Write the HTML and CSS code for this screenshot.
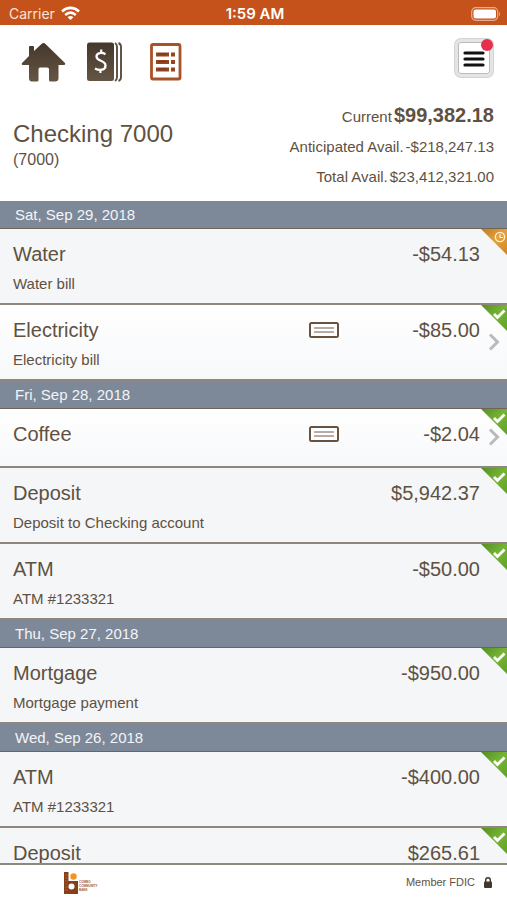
FILE: index.html
```html
<!DOCTYPE html>
<html lang="en">

<head>
    <meta charset="UTF-8">
    <meta name="viewport" content="width=device-width, initial-scale=1.0">
    <title>Checking 7000</title>
    <link rel="stylesheet" href="styles.css">
</head>

<body>
    <!-- shared icons -->
    <svg class="defs" aria-hidden="true">
        <defs>
            <linearGradient id="green" x1="0" y1="0" x2="1" y2="1">
                <stop offset="0" stop-color="#568d24" />
                <stop offset="0.5" stop-color="#75b435" />
                <stop offset="1" stop-color="#60a027" />
            </linearGradient>
            <linearGradient id="orange" x1="0" y1="0" x2="1" y2="1">
                <stop offset="0" stop-color="#bd7b25" />
                <stop offset="0.5" stop-color="#e5a13b" />
                <stop offset="1" stop-color="#cf851f" />
            </linearGradient>
            <linearGradient id="brown" x1="0" y1="0" x2="0" y2="1">
                <stop offset="0" stop-color="#44382b" />
                <stop offset="1" stop-color="#655544" />
            </linearGradient>
        </defs>
        <symbol id="done" viewBox="0 0 26 26">
            <path d="M0 0H26V26Z" fill="url(#green)" />
            <path d="M13 9L16.500 12.500L23.500 5.500" fill="none" stroke="#fff" stroke-width="2.800" />
        </symbol>
        <symbol id="pending" viewBox="0 0 26 26">
            <path d="M0 0H26V26Z" fill="url(#orange)" />
            <circle cx="19" cy="8" r="4.600" fill="none" stroke="#fff3d8" stroke-width="1.400" />
            <path d="M19 5V8.500H22" fill="none" stroke="#fff3d8" stroke-width="1.200" />
        </symbol>
        <symbol id="check" viewBox="0 0 30 16">
            <rect x="1" y="1" width="28" height="14" rx="1.500" fill="#fff" stroke="#685341" stroke-width="2" />
            <path d="M5 6H25M5 10H25" stroke="#a38f89" stroke-width="1.600" />
        </symbol>
        <symbol id="arrow" viewBox="0 0 12 18">
            <path d="M2 1.500L9.500 9L2 16.500" fill="none" stroke="#b9babd" stroke-width="3" />
        </symbol>
    </svg>

    <div class="app">
        <div class="status">
            <div class="carrier">
                <span>Carrier</span>
                <svg width="19" height="15" viewBox="0 0 19 15" fill="none" stroke="#fff" stroke-width="2.600">
                    <path d="M1 5.500C6 0.600 13 0.600 18 5.500" />
                    <path d="M4.200 9C7.500 6 11.500 6 14.800 9" />
                    <path d="M9.500 14L6.600 11.200C8.300 9.700 10.700 9.700 12.400 11.200Z" fill="#fff" stroke="none" />
                </svg>
            </div>
            <div class="time">1:59 AM</div>
            <div class="battery">
                <svg width="30" height="14" viewBox="0 0 30 14">
                    <rect x="0.700" y="0.700" width="26" height="12.600" rx="4" fill="none" stroke="#e6ac90" stroke-width="1.200" />
                    <rect x="2.500" y="2.500" width="22.500" height="9" rx="2" fill="#fff" />
                    <path d="M28 4.500Q30 7 28 9.500Z" fill="#e6ac90" />
                </svg>
            </div>
        </div>

        <header>
            <div class="toolbar">
                <nav>
                    <a href="#home" aria-label="Home">
                        <svg width="45" height="40" viewBox="0 0 45 40">
                            <path d="M8 5Q8 4 9 4H12Q13 4 13 5V9L20.500 2Q22.500 0 24.500 2L44 21Q45 23 42 23H37.500V36Q37.500 39.500 34 39.500H29.500Q28 39.500 28 38V27Q28 25.500 26 25.500H19Q17.500 25.500 17.500 27V38Q17.500 39.500 16 39.500H11Q8 39.500 8 36V23H2.500Q0 23 1 21L8 14Z" fill="url(#brown)" />
                        </svg>
                    </a>
                    <a href="#accounts" aria-label="Accounts">
                        <svg width="37" height="40" viewBox="0 0 37 40">
                            <rect x="1" width="27" height="38.500" y="0.500" rx="2.500" fill="url(#brown)" />
                            <path d="M29 1Q31 2 31 5V35Q31 38 29 39M32.500 1Q35 2 35 5V35Q35 38 32.500 39" fill="none" stroke="#5c4e3f" stroke-width="1.900" />
                            <path d="M19.500 12.200C16.500 10.400 10.500 10.200 10.500 14.500C10.500 19.500 19.500 18 19.500 23.500C19.500 28.500 13.500 28.800 9 26.500" fill="none" stroke="#fff" stroke-width="2.300" />
                            <path d="M15.200 7.500V11M14.400 27.500V31" stroke="#fff" stroke-width="2.200" />
                        </svg>
                    </a>
                    <a href="#history" aria-label="History">
                        <svg width="32" height="38" viewBox="0 0 32 38">
                            <rect x="1.500" y="1.500" width="28.500" height="34.500" rx="1.500" fill="#fff" stroke="#a95127" stroke-width="2.800" />
                            <path d="M6 11.500H19M6 19H19M6 26.500H19M21 11.500H25M21 19H25M21 26.500H25" stroke="#97441f" stroke-width="3.800" />
                            <path d="M8 11H17M8 18.500H17M8 26H17" stroke="#693620" stroke-width="1.200" />
                        </svg>
                    </a>
                </nav>
                <button class="menu" type="button" aria-label="Menu">
                    <svg width="22" height="18" viewBox="0 0 22 18">
                        <path d="M2 3H20M2 9H20M2 15H20" stroke="#111" stroke-width="3.200" stroke-linecap="round" />
                    </svg>
                    <span class="dot"></span>
                </button>
            </div>
            <div class="account">
                <div>
                    <h1>Checking 7000</h1>
                    <p class="number">(7000)</p>
                </div>
                <div class="balances">
                    <p class="current"><span>Current</span> <b>$99,382.18</b></p>
                    <p><span>Anticipated Avail.</span> <span>-$218,247.13</span></p>
                    <p><span>Total Avail.</span> <span>$23,412,321.00</span></p>
                </div>
            </div>
        </header>

        <main>
            <h2>Sat, Sep 29, 2018</h2>
            <div class="row">
                <span class="name">Water</span>
                <span class="amount">-$54.13</span>
                <span class="memo">Water bill</span>
                <svg class="corner"><use href="#pending" /></svg>
            </div>
            <a class="row link" href="#electricity">
                <span class="name">Electricity</span>
                <svg class="check"><use href="#check" /></svg>
                <span class="amount">-$85.00</span>
                <span class="memo">Electricity bill</span>
                <svg class="corner"><use href="#done" /></svg>
                <svg class="arrow"><use href="#arrow" /></svg>
            </a>

            <h2>Fri, Sep 28, 2018</h2>
            <a class="row link short" href="#coffee">
                <span class="name">Coffee</span>
                <svg class="check"><use href="#check" /></svg>
                <span class="amount">-$2.04</span>
                <svg class="corner"><use href="#done" /></svg>
                <svg class="arrow"><use href="#arrow" /></svg>
            </a>
            <div class="row">
                <span class="name">Deposit</span>
                <span class="amount">$5,942.37</span>
                <span class="memo">Deposit to Checking account</span>
                <svg class="corner"><use href="#done" /></svg>
            </div>
            <div class="row">
                <span class="name">ATM</span>
                <span class="amount">-$50.00</span>
                <span class="memo">ATM #1233321</span>
                <svg class="corner"><use href="#done" /></svg>
            </div>

            <h2>Thu, Sep 27, 2018</h2>
            <div class="row">
                <span class="name">Mortgage</span>
                <span class="amount">-$950.00</span>
                <span class="memo">Mortgage payment</span>
                <svg class="corner"><use href="#done" /></svg>
            </div>

            <h2>Wed, Sep 26, 2018</h2>
            <div class="row">
                <span class="name">ATM</span>
                <span class="amount">-$400.00</span>
                <span class="memo">ATM #1233321</span>
                <svg class="corner"><use href="#done" /></svg>
            </div>
            <div class="row">
                <span class="name">Deposit</span>
                <span class="amount">$265.61</span>
                <svg class="corner"><use href="#done" /></svg>
            </div>
        </main>

        <footer>
            <div class="logo">
                <svg width="14" height="22" viewBox="0 0 14 22">
                    <path d="M0 0H4.500V9H14V22H0Z" fill="#873f1a" />
                    <path d="M1 3H4M1 6H4M1 9H4M1 12H4M1 15H4M1 18H4" stroke="#a86a49" stroke-width="0.700" />
                    <circle cx="7.500" cy="14.500" r="3" fill="#fff" />
                    <circle cx="9.500" cy="4.500" r="3.200" fill="#f3951d" />
                </svg>
                <span>COMBO<br>COMMUNITY<br>BANK</span>
            </div>
            <div class="fdic">
                <span>Member FDIC</span>
                <svg width="8" height="11" viewBox="0 0 8 11">
                    <path d="M1.700 5V3Q1.700 0.700 4 0.700T6.300 3V5" fill="none" stroke="#43362b" stroke-width="1.400" />
                    <rect y="4.500" width="8" height="6.500" rx="1" fill="#43362b" />
                </svg>
            </div>
        </footer>
    </div>
</body>

</html>
```

FILE: styles.css
```css
* {
    box-sizing: border-box;
}
body {
    margin: 0;
    font-family: "Liberation Sans", Arial, sans-serif;
    color: #5f5142;
    background: #fff;
}
h1, h2, p {
    margin: 0;
    font-weight: normal;
}
svg {
    display: block;
}
.defs {
    position: absolute;
    width: 0;
    height: 0;
}
.app {
    display: flex;
    flex-direction: column;
    height: 100vh;
}

/* status bar */
.status {
    display: grid;
    grid-template-columns: 1fr auto 1fr;
    align-items: center;
    flex: none;
    height: 25px;
    padding: 2px 6px 0 9px;
    background: #c5521a;
    color: #fff;
    font-family: Inter, "Liberation Sans", sans-serif;
    font-size: 14px;
}
.carrier {
    display: flex;
    align-items: center;
    gap: 6px;
    color: #fbe3d6;
}
.time {
    font-size: 15px;
    font-weight: 600;
}
.battery {
    justify-self: end;
}

/* header */
header {
    flex: none;
    padding: 12px 13px 9px;
}
.toolbar {
    display: flex;
    justify-content: space-between;
    align-items: flex-start;
}
nav {
    display: flex;
    align-items: center;
    gap: 20px;
    height: 50px;
    padding-left: 8px;
}
nav a:last-child {
    margin-left: 7px;
}
.menu {
    position: relative;
    display: flex;
    align-items: center;
    justify-content: center;
    width: 38px;
    height: 38px;
    margin: 2px 1px 0 0;
    padding: 2px 0 0;
    border: 3px solid #e4e4e4;
    border-radius: 6px;
    background: #fff;
    box-shadow: inset 0 0 0 1px #bbb, 0 0 0 1px #d4d4d4;
    cursor: pointer;
}
.dot {
    position: absolute;
    top: -3px;
    right: -3px;
    width: 12px;
    height: 12px;
    border-radius: 50%;
    background: #e72f4b;
}
.account {
    display: flex;
    justify-content: space-between;
    align-items: flex-start;
}
h1 {
    padding-top: 33px;
    font-size: 24px;
    line-height: 28px;
}
.number {
    font-size: 16px;
    line-height: 24px;
}
.balances {
    padding-top: 13px;
    font-size: 15px;
    line-height: 30px;
}
.balances p {
    display: flex;
    justify-content: flex-end;
    align-items: baseline;
    gap: 2px;
    height: 30px;
}
.balances .current {
    height: 32px;
}
.balances b {
    font-size: 20px;
}

/* transactions */
main {
    flex: 1;
    min-height: 0;
    overflow-y: auto;
    scrollbar-width: none;
}
h2 {
    height: 28px;
    padding-left: 15px;
    border-bottom: 1px solid #706457;
    background: #7d8999;
    color: #f3f5f8;
    font-size: 15px;
    line-height: 28px;
}
.row {
    position: relative;
    display: grid;
    grid-template-columns: 1fr auto 141px;
    align-items: center;
    align-content: start;
    row-gap: 9px;
    height: 76px;
    padding: 15px 27px 0 13px;
    border-bottom: 2px solid #8f877d;
    background: #f4f6f8;
    color: inherit;
    text-decoration: none;
}
.link {
    background: linear-gradient(#fff, #f7f8fa);
}
.short {
    height: 59px;
}
.name, .amount {
    font-size: 20px;
    line-height: 20px;
}
.amount {
    grid-column: 3;
    text-align: right;
}
.memo {
    grid-column: 1 / -1;
    font-size: 15px;
    line-height: 22px;
}
.check {
    width: 30px;
    height: 16px;
}
.corner {
    position: absolute;
    top: 0;
    right: 0;
    width: 26px;
    height: 26px;
}
.arrow {
    position: absolute;
    top: 28px;
    right: 7px;
    width: 12px;
    height: 18px;
}
.short .arrow {
    top: 19px;
}

/* footer */
footer {
    display: flex;
    justify-content: space-between;
    flex: none;
    height: 37px;
    padding: 7px 15px 0 64px;
    border-top: 2px solid #8b8b7c;
    background: #fff;
}
.logo {
    display: flex;
    align-items: flex-start;
}
.logo span {
    padding: 8px 0 0 1px;
    color: #a25a34;
    font-size: 3px;
    font-weight: bold;
    line-height: 4px;
}
.fdic {
    display: flex;
    align-items: center;
    gap: 9px;
    height: 20px;
    font-size: 11px;
}
```
